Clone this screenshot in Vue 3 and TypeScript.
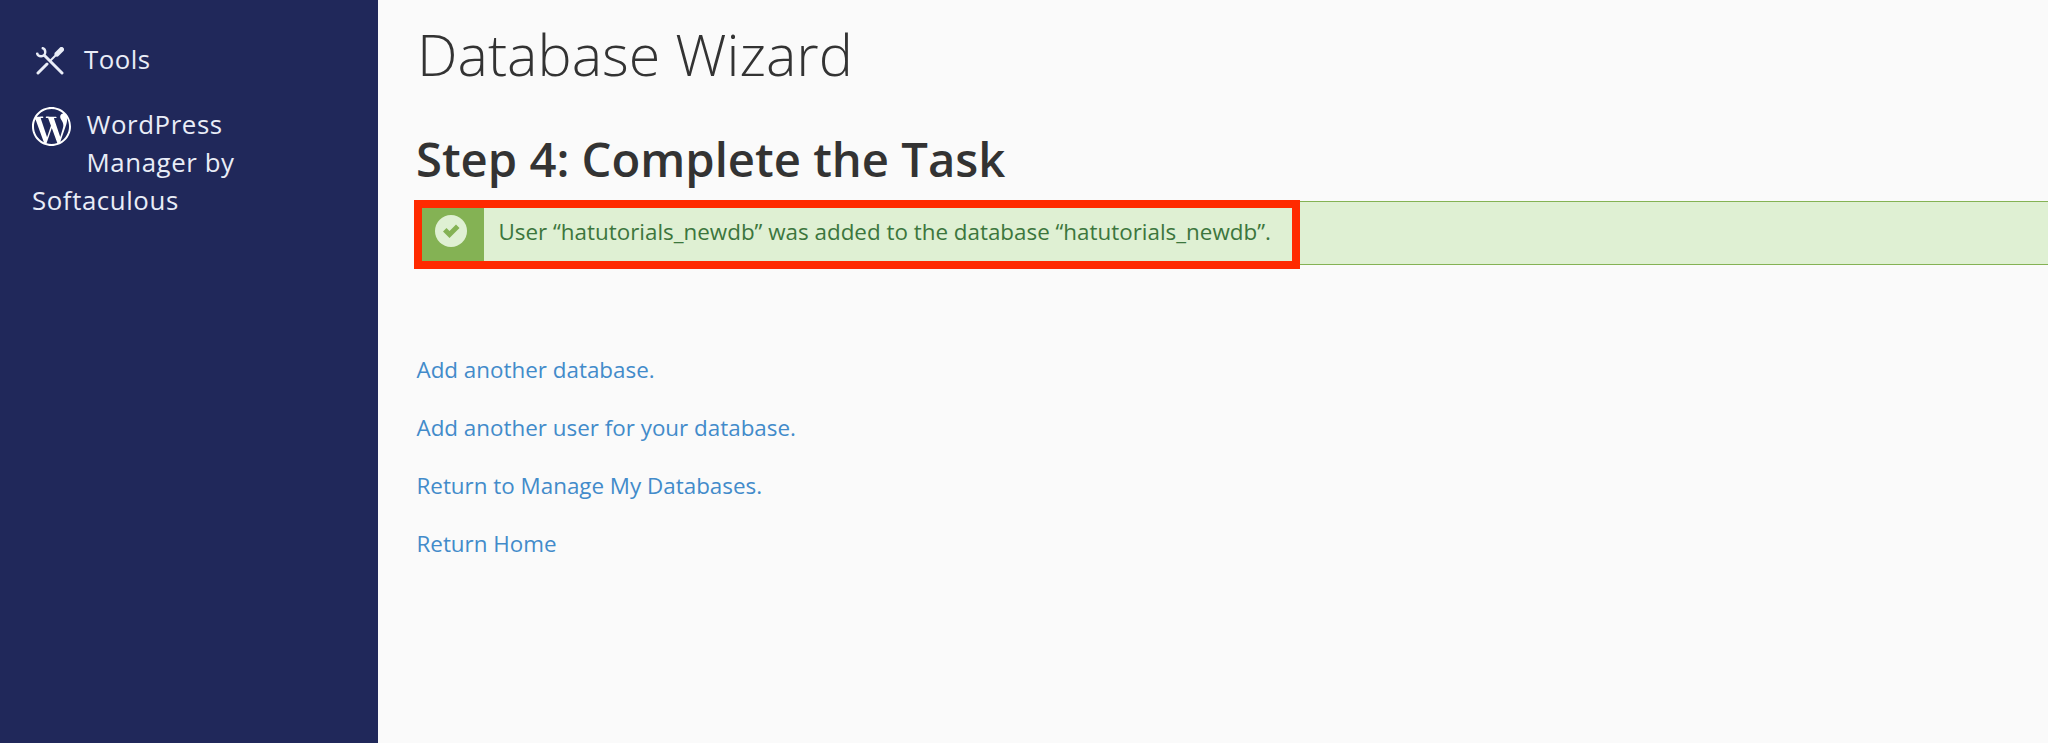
<script setup lang="ts">
const links: string[] = [
  'Add another database.',
  'Add another user for your database.',
  'Return to Manage My Databases.',
  'Return Home',
]
</script>

<template>
  <div class="page">
    <aside class="sidebar">
      <div class="nav-tools">
        <svg class="tools-icon" viewBox="0 0 28 28" fill="none" stroke="#e9edf7" stroke-linecap="round" aria-hidden="true">
          <path d="M5.7 0.9 A4.2 4.2 0 1 1 0.9 5.7" stroke-width="2.4" stroke-linecap="butt" />
          <path d="M9 9 L26 26" stroke-width="3" />
          <path d="M25.5 2.5 L21 7" stroke-width="5" />
          <path d="M20 8 L14.5 13.5" stroke-width="2" stroke-linecap="butt" />
          <path d="M11 17 L2 26" stroke-width="3" />
        </svg>
        <span>Tools</span>
      </div>
      <div class="nav-wp">
        <svg class="wp-icon" viewBox="0 0 24 24" aria-hidden="true">
          <path fill="#fff" d="M21.469 6.825c.84 1.537 1.318 3.3 1.318 5.175 0 3.979-2.156 7.456-5.363 9.325l3.295-9.527c.615-1.54.82-2.771.82-3.864 0-.405-.026-.78-.07-1.11m-7.981.105c.647-.03 1.232-.105 1.232-.105.582-.075.514-.93-.067-.899 0 0-1.755.135-2.88.135-1.064 0-2.85-.15-2.85-.15-.585-.03-.661.855-.075.885 0 0 .54.061 1.125.09l1.68 4.605-2.37 7.08L5.354 6.9c.649-.03 1.234-.1 1.234-.1.585-.075.516-.93-.065-.896 0 0-1.746.138-2.874.138-.2 0-.438-.008-.69-.015C4.911 3.15 8.235 1.215 12 1.215c2.809 0 5.365 1.072 7.286 2.833-.046-.003-.091-.009-.141-.009-1.06 0-1.812.923-1.812 1.914 0 .89.513 1.643 1.06 2.531.411.72.89 1.643.89 2.977 0 .915-.354 1.994-.821 3.479l-1.075 3.585-3.9-11.61.001.014zM12 22.784c-1.059 0-2.081-.153-3.048-.437l3.237-9.406 3.315 9.087c.024.053.05.101.078.149-1.12.393-2.325.609-3.582.609M1.211 12c0-1.564.336-3.05.935-4.39L7.29 21.709C3.694 19.96 1.212 16.271 1.211 12M12 0C5.385 0 0 5.385 0 12s5.385 12 12 12 12-5.385 12-12S18.615 0 12 0"/>
        </svg>
        <span class="wp-text">WordPress<br />Manager by<br /><span class="wp-last">Softaculous</span></span>
      </div>
    </aside>
    <main class="content">
      <h1>Database Wizard</h1>
      <h2>Step 4: Complete the Task</h2>
      <div class="alert-wrap">
        <div class="alert">
          <div class="alert-icon">
            <svg viewBox="0 0 32 32" aria-hidden="true">
              <circle cx="16" cy="16" r="16" fill="#dff0d3"/>
              <path d="M8 16.5 L11.5 13 L14.5 16 L21 9.5 L24.5 13 L14.5 23 Z" fill="#84b254"/>
            </svg>
          </div>
          <span class="alert-text">User “hatutorials_newdb” was added to the database “hatutorials_newdb”.</span>
        </div>
        <div class="highlight"></div>
      </div>
      <ul class="links">
        <li v-for="link in links" :key="link"><a href="#">{{ link }}</a></li>
      </ul>
    </main>
  </div>
</template>

<style>
html, body { margin: 0; background: #fafafa; overflow: hidden; }
</style>

<style scoped>
.page {
  display: flex;
  height: 743px;
  width: 2048px;
  font-family: "Open Sans", "Noto Sans", sans-serif;
  background: #fafafa;
}
.sidebar {
  width: 378px;
  flex: none;
  box-sizing: border-box;
  background: #20285a;
  color: #e9edf7;
  font-size: 25.8px;
  padding: 41px 0 0 32px;
}
.nav-tools {
  display: flex;
  align-items: center;
  height: 36px;
  gap: 20px;
  padding-left: 4px;
  letter-spacing: 0.5px;
}
.tools-icon { width: 28px; height: 28px; margin-top: 3px; flex: none; }
.nav-wp {
  display: flex;
  margin-top: 28px;
  line-height: 38px;
  letter-spacing: 0.6px;
}
.wp-icon { width: 39px; height: 39px; flex: none; margin-top: 2px; }
.wp-text { margin-left: 15.5px; }
.wp-last { margin-left: -54.5px; }
.content {
  flex: 1;
  min-width: 0;
  padding-top: 16px;
}
h1 {
  margin: 0 0 0 39px;
  font-size: 57.4px;
  font-weight: 300;
  line-height: 76px;
  color: #333;
}
h2 {
  margin: 39px 0 0 38px;
  font-size: 47.2px;
  font-weight: 600;
  line-height: 56px;
  color: #333;
}
.alert-wrap {
  position: relative;
  margin: 14px 0 0 44px;
}
.alert {
  display: flex;
  align-items: center;
  height: 64px;
  box-sizing: border-box;
  background: #dff0d3;
  border-top: 1px solid #84b254;
  border-bottom: 1px solid #84b254;
  color: #3c763d;
  font-size: 22.4px;
}
.alert-icon {
  width: 62px;
  align-self: stretch;
  background: #84b254;
  display: flex;
  align-items: center;
  justify-content: center;
  flex: none;
}
.alert-icon svg { width: 32px; height: 32px; margin: 0 5px 4px 0; }
.alert-text { margin: 0 0 4px 14.5px; }
.highlight {
  position: absolute;
  left: -8px;
  top: -1px;
  width: 886px;
  height: 69px;
  box-sizing: border-box;
  border: 8px solid #ff2a00;
}
.links {
  list-style: none;
  margin: 90px 0 0 38.5px;
  padding: 0;
  font-size: 22.4px;
}
.links li { height: 58px; line-height: 30px; }
.links a { color: #428bca; text-decoration: none; }
</style>
